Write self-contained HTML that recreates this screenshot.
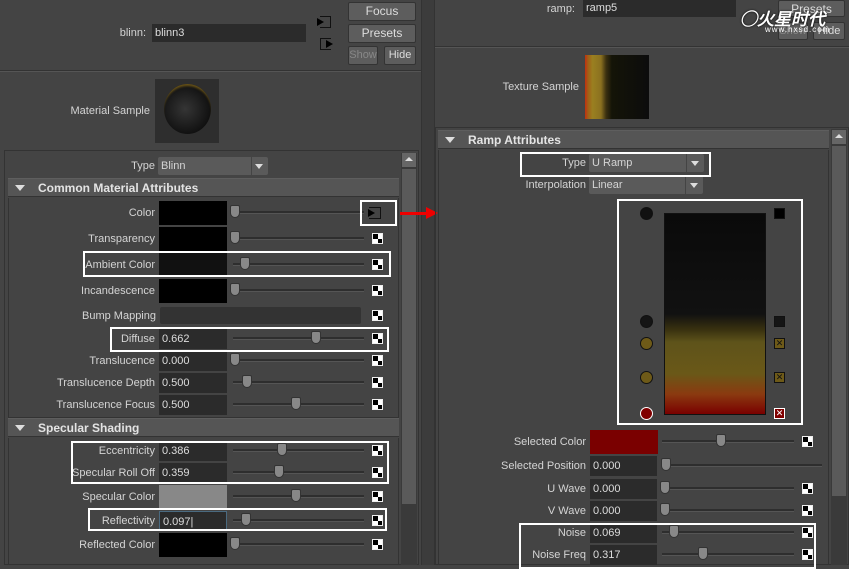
<!DOCTYPE html>
<html><head><style>
*{margin:0;padding:0;box-sizing:border-box}
body{width:849px;height:565px;overflow:hidden;background:#444;font-family:"Liberation Sans",sans-serif;font-size:11px;color:#d4d4d4;position:relative}
.a{position:absolute}
.lbl{position:absolute;text-align:right;white-space:nowrap;line-height:14px}
.fld{position:absolute;background:#2b2b2b;height:20px;line-height:20px;padding-left:3px;color:#ddd}
.sw{position:absolute;height:24px}
.trk{position:absolute;height:3px;background:#2e2e2e;border-bottom:1px solid #555}
.th{position:absolute;width:10px;height:13px;background:#888;border:1px solid #333;border-radius:2px 2px 5px 5px}
.ck{position:absolute;width:11px;height:11px;background:
linear-gradient(#000,#000) 0 0/5px 5px no-repeat,linear-gradient(#000,#000) 5px 5px/6px 6px no-repeat,#fff;border:1px solid #eee}
.box{position:absolute;border:2px solid #fff}
.hdr{position:absolute;background:#555;height:19px;font-weight:bold;font-size:12px;line-height:19px;color:#e4e4e4;border-top:1px solid #5e5e5e;border-bottom:1px solid #333}
.tri{position:absolute;width:0;height:0;border-left:5px solid transparent;border-right:5px solid transparent;border-top:6px solid #ddd}
.btn{position:absolute;background:#5d5d5d;border:1px solid #333;border-radius:2px;text-align:center;line-height:17px;color:#ddd;font-size:12px}
.dd{position:absolute;background:#5a5a5a;height:18px;line-height:18px;padding-left:3px;border-radius:2px}
.dd:after{content:"";position:absolute;right:5px;top:7px;border-left:4px solid transparent;border-right:4px solid transparent;border-top:5px solid #ddd}
.ddsep{position:absolute;top:0;width:1px;height:18px;background:#444}
.cir{position:absolute;width:13px;height:13px;border-radius:50%;border:1px solid #111}
.sq{position:absolute;width:11px;height:11px;border:1px solid #111}
</style></head><body>
<!-- left panel top -->
<div class="lbl" style="left:100px;top:26px;width:46px;">blinn:</div>
<div class="fld" style="left:152px;top:24px;width:154px;height:18px;line-height:18px">blinn3</div>
<div class="a" style="left:320px;top:16px;width:11px;height:12px;border:1px solid #111;border-left:none"></div>
<div class="a" style="left:317px;top:18px;border-left:7px solid #000;border-top:4px solid transparent;border-bottom:4px solid transparent"></div>
<div class="a" style="left:320px;top:38px;width:11px;height:12px;border:1px solid #111;border-right:none"></div>
<div class="a" style="left:326px;top:40px;border-left:7px solid #000;border-top:4px solid transparent;border-bottom:4px solid transparent"></div>
<div class="btn" style="left:348px;top:2px;width:68px;height:19px">Focus</div>
<div class="btn" style="left:348px;top:24px;width:68px;height:19px">Presets</div>
<div class="btn" style="left:348px;top:46px;width:30px;height:19px;color:#888;font-size:11px">Show</div>
<div class="btn" style="left:384px;top:46px;width:32px;height:19px;font-size:11px">Hide</div>
<div class="a" style="left:0;top:70px;width:421px;height:2px;background:#333;border-bottom:1px solid #555"></div>
<div class="lbl" style="left:40px;top:104px;width:110px">Material Sample</div>
<div class="a" style="left:155px;top:79px;width:64px;height:64px;background:#2e2e2e"></div>
<div class="a" style="left:164px;top:84px;width:47px;height:50px;border-radius:50%;background:radial-gradient(circle at 45% 50%,#353535,#111 70%);box-shadow:inset 0 3px 2px -1px #6a5418"></div>
<div class="a" style="left:4px;top:150px;width:415px;height:415px;border:1px solid #333"></div>
<div class="a" style="left:401px;top:153px;width:16px;height:412px;background:#3a3a3a"></div>
<div class="a" style="left:402px;top:153px;width:14px;height:14px;background:#666"></div>
<div class="a" style="left:405px;top:157px;border-left:4px solid transparent;border-right:4px solid transparent;border-bottom:4px solid #ddd"></div>
<div class="a" style="left:402px;top:169px;width:14px;height:335px;background:#5a5a5a"></div>
<div class="lbl" style="left:100px;top:159px;width:55px">Type</div>
<div class="dd" style="left:158px;top:157px;width:110px">Blinn<div class="ddsep" style="left:93px"></div></div>
<div class="hdr" style="left:8px;top:178px;width:391px"><span style="margin-left:30px">Common Material Attributes</span></div>
<div class="tri" style="left:15px;top:185px"></div>
<div class="a" style="left:8px;top:198px;width:391px;height:220px;border:1px solid #333;border-top:none"></div>

<div class="lbl" style="left:60px;top:206px;width:95px">Color</div>
<div class="sw" style="left:159px;top:201px;width:68px;background:#000"></div>
<div class="trk" style="left:233px;top:211px;width:131px"></div><div class="th" style="left:230px;top:205px"></div>
<div class="a" style="left:369px;top:207px;width:12px;height:12px;border:1px solid #111;border-left:none"></div>
<div class="a" style="left:368px;top:209px;border-left:7px solid #000;border-top:4px solid transparent;border-bottom:4px solid transparent"></div>

<div class="lbl" style="left:60px;top:232px;width:95px">Transparency</div>
<div class="sw" style="left:159px;top:227px;width:68px;background:#000"></div>
<div class="trk" style="left:233px;top:237px;width:131px"></div><div class="th" style="left:230px;top:231px"></div><div class="ck" style="left:372px;top:233px"></div>

<div class="lbl" style="left:60px;top:258px;width:95px">Ambient Color</div>
<div class="sw" style="left:159px;top:253px;width:68px;background:#111"></div>
<div class="trk" style="left:233px;top:263px;width:131px"></div><div class="th" style="left:240px;top:257px"></div><div class="ck" style="left:372px;top:259px"></div>

<div class="lbl" style="left:60px;top:284px;width:95px">Incandescence</div>
<div class="sw" style="left:159px;top:279px;width:68px;background:#000"></div>
<div class="trk" style="left:233px;top:289px;width:131px"></div><div class="th" style="left:230px;top:283px"></div><div class="ck" style="left:372px;top:285px"></div>

<div class="lbl" style="left:60px;top:309px;width:96px">Bump Mapping</div>
<div class="a" style="left:160px;top:307px;width:201px;height:17px;background:#333;border-radius:2px"></div><div class="ck" style="left:372px;top:310px"></div>

<div class="lbl" style="left:60px;top:332px;width:95px">Diffuse</div>
<div class="fld" style="left:159px;top:329px;width:68px">0.662</div>
<div class="trk" style="left:233px;top:337px;width:131px"></div><div class="th" style="left:311px;top:331px"></div><div class="ck" style="left:372px;top:333px"></div>

<div class="lbl" style="left:40px;top:354px;width:115px">Translucence</div>
<div class="fld" style="left:159px;top:351px;width:68px">0.000</div>
<div class="trk" style="left:233px;top:359px;width:131px"></div><div class="th" style="left:230px;top:353px"></div><div class="ck" style="left:372px;top:355px"></div>

<div class="lbl" style="left:40px;top:376px;width:115px">Translucence Depth</div>
<div class="fld" style="left:159px;top:373px;width:68px">0.500</div>
<div class="trk" style="left:233px;top:381px;width:131px"></div><div class="th" style="left:242px;top:375px"></div><div class="ck" style="left:372px;top:377px"></div>

<div class="lbl" style="left:40px;top:398px;width:115px">Translucence Focus</div>
<div class="fld" style="left:159px;top:395px;width:68px">0.500</div>
<div class="trk" style="left:233px;top:403px;width:131px"></div><div class="th" style="left:291px;top:397px"></div><div class="ck" style="left:372px;top:399px"></div>

<div class="hdr" style="left:8px;top:418px;width:391px"><span style="margin-left:30px">Specular Shading</span></div>
<div class="tri" style="left:15px;top:425px"></div>
<div class="a" style="left:8px;top:438px;width:391px;height:127px;border:1px solid #333;border-top:none"></div>

<div class="lbl" style="left:40px;top:444px;width:115px">Eccentricity</div>
<div class="fld" style="left:159px;top:441px;width:68px">0.386</div>
<div class="trk" style="left:233px;top:449px;width:131px"></div><div class="th" style="left:277px;top:443px"></div><div class="ck" style="left:372px;top:445px"></div>

<div class="lbl" style="left:40px;top:466px;width:115px">Specular Roll Off</div>
<div class="fld" style="left:159px;top:463px;width:68px">0.359</div>
<div class="trk" style="left:233px;top:471px;width:131px"></div><div class="th" style="left:274px;top:465px"></div><div class="ck" style="left:372px;top:467px"></div>

<div class="lbl" style="left:40px;top:490px;width:115px">Specular Color</div>
<div class="sw" style="left:159px;top:485px;width:68px;background:#888"></div>
<div class="trk" style="left:233px;top:495px;width:131px"></div><div class="th" style="left:291px;top:489px"></div><div class="ck" style="left:372px;top:491px"></div>

<div class="lbl" style="left:40px;top:514px;width:115px">Reflectivity</div>
<div class="fld" style="left:159px;top:511px;width:68px;border:1px solid #4a6a80">0.097|</div>
<div class="trk" style="left:233px;top:519px;width:131px"></div><div class="th" style="left:241px;top:513px"></div><div class="ck" style="left:372px;top:515px"></div>

<div class="lbl" style="left:40px;top:538px;width:115px">Reflected Color</div>
<div class="sw" style="left:159px;top:533px;width:68px;background:#000"></div>
<div class="trk" style="left:233px;top:543px;width:131px"></div><div class="th" style="left:230px;top:537px"></div><div class="ck" style="left:372px;top:539px"></div>

<!-- highlight boxes left -->
<div class="box" style="left:360px;top:200px;width:37px;height:26px"></div>
<div class="box" style="left:83px;top:251px;width:308px;height:26px"></div>
<div class="box" style="left:110px;top:327px;width:279px;height:25px"></div>
<div class="box" style="left:71px;top:441px;width:318px;height:43px"></div>
<div class="box" style="left:88px;top:508px;width:299px;height:23px"></div>

<!-- separator -->
<div class="a" style="left:421px;top:0;width:14px;height:565px;background:#3c3c3c;border-left:1px solid #333;border-right:1px solid #333"></div>
<!-- red arrow -->
<div class="a" style="left:400px;top:212px;width:28px;height:3px;background:#e00"></div>
<div class="a" style="left:426px;top:207px;border-left:12px solid #e00;border-top:6px solid transparent;border-bottom:6px solid transparent"></div>

<!-- right panel -->
<div class="lbl" style="left:530px;top:2px;width:45px">ramp:</div>
<div class="fld" style="left:583px;top:0;width:153px;height:17px;line-height:17px">ramp5</div>
<div class="btn" style="left:778px;top:0;width:67px;height:17px">Presets</div>
<div class="btn" style="left:778px;top:22px;width:30px;height:18px;color:#888;font-size:11px">Show</div>
<div class="btn" style="left:813px;top:22px;width:32px;height:18px;font-size:11px">Hide</div>
<div class="a" style="left:740px;top:5px;font-style:italic;font-weight:bold;font-size:17px;color:#fff;text-shadow:0 0 2px #000">◯火星时代</div>
<div class="a" style="left:765px;top:25px;font-size:8px;color:#fff;letter-spacing:1px">www.hxsd.com</div>
<div class="a" style="left:435px;top:46px;width:414px;height:2px;background:#333;border-bottom:1px solid #555"></div>
<div class="lbl" style="left:480px;top:80px;width:99px">Texture Sample</div>
<div class="a" style="left:585px;top:55px;width:64px;height:64px;background:linear-gradient(90deg,#c03010 0%,#a06018 5%,#9a8020 12%,#8a7020 25%,#3a3010 33%,#141408 42%,#0c0c0c 100%)"></div>
<div class="a" style="left:435px;top:127px;width:414px;height:438px;border:1px solid #333"></div>
<div class="a" style="left:831px;top:129px;width:16px;height:436px;background:#3a3a3a"></div>
<div class="a" style="left:832px;top:130px;width:14px;height:14px;background:#666"></div>
<div class="a" style="left:835px;top:134px;border-left:4px solid transparent;border-right:4px solid transparent;border-bottom:4px solid #ddd"></div>
<div class="a" style="left:832px;top:146px;width:14px;height:350px;background:#5a5a5a"></div>
<div class="hdr" style="left:438px;top:130px;width:391px"><span style="margin-left:30px">Ramp Attributes</span></div>
<div class="tri" style="left:445px;top:137px"></div>
<div class="a" style="left:438px;top:150px;width:391px;height:415px;border:1px solid #333;border-top:none"></div>

<div class="lbl" style="left:530px;top:156px;width:56px">Type</div>
<div class="dd" style="left:589px;top:154px;width:115px">U Ramp<div class="ddsep" style="left:97px"></div></div>
<div class="lbl" style="left:500px;top:178px;width:86px">Interpolation</div>
<div class="dd" style="left:589px;top:176px;width:114px">Linear<div class="ddsep" style="left:96px"></div></div>
<div class="box" style="left:520px;top:152px;width:191px;height:25px"></div>

<div class="a" style="left:664px;top:213px;width:102px;height:202px;border:1px solid #111;background:linear-gradient(#0a0a0a 0%,#111 50%,#3a3210 58%,#5e531a 64%,#6a5818 80%,#8a3a10 90%,#7a0000 100%)"></div>
<div class="cir" style="left:640px;top:207px;background:#111"></div>
<div class="cir" style="left:640px;top:315px;background:#151515"></div>
<div class="cir" style="left:640px;top:337px;background:#6e5a18"></div>
<div class="cir" style="left:640px;top:371px;background:#6e5a18"></div>
<div class="cir" style="left:640px;top:407px;background:#800000;border-color:#fff"></div>
<div class="sq" style="left:774px;top:208px;background:#000"></div>
<div class="sq" style="left:774px;top:316px;background:#151515"></div>
<div class="sq" style="left:774px;top:338px;background:#6e5a18;font-size:9px;line-height:9px;text-align:center;color:#111">✕</div>
<div class="sq" style="left:774px;top:372px;background:#6e5a18;font-size:9px;line-height:9px;text-align:center;color:#111">✕</div>
<div class="sq" style="left:774px;top:408px;background:#800000;border-color:#fff;font-size:9px;line-height:9px;text-align:center;color:#fff">✕</div>
<div class="box" style="left:617px;top:199px;width:186px;height:226px"></div>

<div class="lbl" style="left:480px;top:435px;width:106px">Selected Color</div>
<div class="sw" style="left:590px;top:430px;width:68px;background:#7a0000"></div>
<div class="trk" style="left:662px;top:440px;width:132px"></div><div class="th" style="left:716px;top:434px"></div><div class="ck" style="left:802px;top:436px"></div>

<div class="lbl" style="left:480px;top:459px;width:106px">Selected Position</div>
<div class="fld" style="left:590px;top:456px;width:67px">0.000</div>
<div class="trk" style="left:662px;top:464px;width:160px"></div><div class="th" style="left:661px;top:458px"></div>

<div class="lbl" style="left:480px;top:482px;width:106px">U Wave</div>
<div class="fld" style="left:590px;top:479px;width:67px">0.000</div>
<div class="trk" style="left:662px;top:487px;width:132px"></div><div class="th" style="left:660px;top:481px"></div><div class="ck" style="left:802px;top:483px"></div>

<div class="lbl" style="left:480px;top:504px;width:106px">V Wave</div>
<div class="fld" style="left:590px;top:501px;width:67px">0.000</div>
<div class="trk" style="left:662px;top:509px;width:132px"></div><div class="th" style="left:660px;top:503px"></div><div class="ck" style="left:802px;top:505px"></div>

<div class="lbl" style="left:480px;top:526px;width:106px">Noise</div>
<div class="fld" style="left:590px;top:523px;width:67px">0.069</div>
<div class="trk" style="left:662px;top:531px;width:132px"></div><div class="th" style="left:669px;top:525px"></div><div class="ck" style="left:802px;top:527px"></div>

<div class="lbl" style="left:480px;top:548px;width:106px">Noise Freq</div>
<div class="fld" style="left:590px;top:545px;width:67px">0.317</div>
<div class="trk" style="left:662px;top:553px;width:132px"></div><div class="th" style="left:698px;top:547px"></div><div class="ck" style="left:802px;top:549px"></div>
<div class="box" style="left:519px;top:523px;width:297px;height:46px"></div>
</body></html>
